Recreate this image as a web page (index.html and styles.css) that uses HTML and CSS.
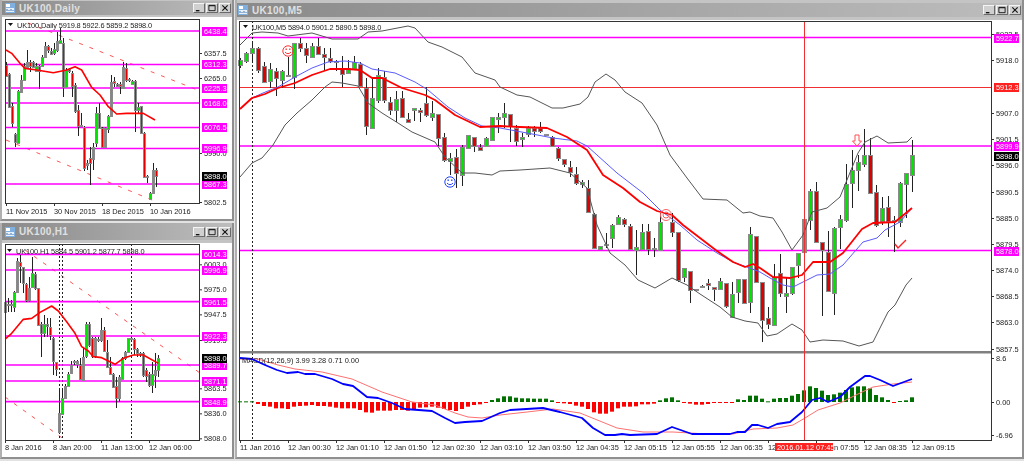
FILE: index.html
```html
<!DOCTYPE html>
<html lang="en">
<head>
  <meta charset="UTF-8" />
  <title>UK100 charts</title>
  <link rel="stylesheet" href="styles.css">
</head>
<body>
  <div class="desk">
    <div class="left">
      <div class="win win-daily">
        <div class="title">
          <svg class="icon" viewBox="0 0 10 10"><rect width="10" height="10" fill="#7fb0e0"/><rect x="1" y="1" width="4" height="3" fill="#fff"/><rect x="1" y="5" width="8" height="4" fill="#e8f0f8"/><path d="M2 8V6M4 8V7M6 8V6M8 8V7" stroke="#3a70b0"/></svg>
          <span class="name">UK100,Daily</span>
          <div class="btns">
            <span class="btn"><svg viewBox="0 0 9 9"><path d="M1 7.500h4" stroke="#111" stroke-width="1.500"/></svg></span>
            <span class="btn"><svg viewBox="0 0 9 9"><path d="M1 1.500h7v6h-7z" fill="none" stroke="#111"/><path d="M1 2h7" stroke="#111"/></svg></span>
            <span class="btn"><svg viewBox="0 0 9 9"><path d="M1.500 1.500l6 6M7.500 1.500l-6 6" stroke="#111" stroke-width="1.300"/></svg></span>
          </div>
        </div>
        <div class="plot"><svg id="daily"></svg></div>
      </div>
      <div class="win win-h1">
        <div class="title">
          <svg class="icon" viewBox="0 0 10 10"><rect width="10" height="10" fill="#7fb0e0"/><rect x="1" y="1" width="4" height="3" fill="#fff"/><rect x="1" y="5" width="8" height="4" fill="#e8f0f8"/><path d="M2 8V6M4 8V7M6 8V6M8 8V7" stroke="#3a70b0"/></svg>
          <span class="name">UK100,H1</span>
          <div class="btns">
            <span class="btn"><svg viewBox="0 0 9 9"><path d="M1 7.500h4" stroke="#111" stroke-width="1.500"/></svg></span>
            <span class="btn"><svg viewBox="0 0 9 9"><path d="M1 1.500h7v6h-7z" fill="none" stroke="#111"/><path d="M1 2h7" stroke="#111"/></svg></span>
            <span class="btn"><svg viewBox="0 0 9 9"><path d="M1.500 1.500l6 6M7.500 1.500l-6 6" stroke="#111" stroke-width="1.300"/></svg></span>
          </div>
        </div>
        <div class="plot"><svg id="h1"></svg></div>
      </div>
    </div>
    <div class="win win-main">
      <div class="title">
        <svg class="icon" viewBox="0 0 10 10"><rect width="10" height="10" fill="#7fb0e0"/><rect x="1" y="1" width="4" height="3" fill="#fff"/><rect x="1" y="5" width="8" height="4" fill="#e8f0f8"/><path d="M2 8V6M4 8V7M6 8V6M8 8V7" stroke="#3a70b0"/></svg>
        <span class="name">UK100,M5</span>
        <div class="btns">
          <span class="btn"><svg viewBox="0 0 9 9"><path d="M1 7.500h4" stroke="#111" stroke-width="1.500"/></svg></span>
          <span class="btn"><svg viewBox="0 0 9 9"><path d="M1 1.500h7v6h-7z" fill="none" stroke="#111"/><path d="M1 2h7" stroke="#111"/></svg></span>
          <span class="btn"><svg viewBox="0 0 9 9"><path d="M1.500 1.500l6 6M7.500 1.500l-6 6" stroke="#111" stroke-width="1.300"/></svg></span>
        </div>
      </div>
      <div class="plot"><svg id="m5"></svg></div>
    </div>
  </div>
  <script src="script.js"></script>
</body>
</html>
```

FILE: styles.css
```css
body {
  margin: 0;
  background: #cfcfcf;
  overflow: hidden;
}
.desk {
  display: flex;
  gap: 1px;
  width: 1024px;
  height: 459px;
  padding-bottom: 2px;
  background: #e2e2e2;
}
.left {
  display: flex;
  flex-direction: column;
  gap: 2px;
  width: 234px;
}
.win {
  display: flex;
  flex-direction: column;
  box-sizing: border-box;
  background: #c4c4c4;
  border-right: 2px solid #8f8f8f;
  border-bottom: 2px solid #8f8f8f;
  border-left: 2px solid #b0b0b0;
}
.win-daily { height: 221px; }
.win-h1 { flex: 1; }
.win-main { flex: 1; padding-top: 1px; }
.title {
  display: flex;
  align-items: center;
  gap: 4px;
  flex: none;
  height: 14px;
  margin: 1px 0 2px;
  padding: 0 1px 0 2px;
  background: linear-gradient(90deg, #8a8a8a, #bdbdbd);
  color: #e0e0e0;
  font: bold 10px "Liberation Sans", Arial, sans-serif;
}
.win-h1 .title {
  height: 17px;
  margin: 0 0 3px;
}
.win-main .title {
  margin: 2px 0 3px;
  padding-left: 0;
}
.icon {
  width: 10px;
  height: 10px;
  margin-left: 1px;
}
.name {
  flex: 1;
  letter-spacing: 0.3px;
}
.btns {
  display: flex;
  gap: 1px;
}
.btn {
  display: flex;
  width: 10px;
  height: 8px;
  background: #d0d0d0;
  border: 1px solid;
  border-color: #f4f4f4 #6a6a6a #6a6a6a #f4f4f4;
}
.btn svg {
  width: 8px;
  height: 8px;
  margin: auto;
}
.plot {
  flex: 1;
  min-height: 0;
  background: #fff;
}
.plot svg {
  display: block;
  width: 100%;
  height: 100%;
  filter: blur(0.3px);
}
.lbl {
  font: 7.4px "Liberation Sans", Arial, sans-serif;
  fill: #222;
}
.lbl.head { letter-spacing: -0.12px; }
.on-tag { fill: #fff; }
```

FILE: script.js
```js
const NS = "http://www.w3.org/2000/svg";

function el(svg, tag, attrs, text) {
  const e = document.createElementNS(NS, tag);
  for (const k in attrs) e.setAttribute(k, attrs[k]);
  if (text) e.textContent = text;
  svg.appendChild(e);
  return e;
}

function setup(id) {
  const svg = document.getElementById(id);
  const r = svg.getBoundingClientRect();
  // the viewBox is the page itself, so the data below is in page pixels
  svg.setAttribute("viewBox", `${r.left} ${r.top} ${r.width} ${r.height}`);
  return svg;
}

function line(svg, x1, y1, x2, y2, color, w, dash) {
  const a = { x1, y1, x2, y2, stroke: color, "stroke-width": w || 1 };
  if (dash) a["stroke-dasharray"] = dash;
  return el(svg, "line", a);
}

function poly(svg, pts, color, w) {
  el(svg, "polyline", {
    points: pts.map(p => p.join(",")).join(" "),
    fill: "none",
    stroke: color,
    "stroke-width": w,
    "stroke-linejoin": "round"
  });
}

function label(svg, x, y, text, cls) {
  el(svg, "text", { x, y: y + 2.6, class: "lbl " + (cls || "") }, text);
}

function tag(svg, x, y, w, text, bg, h) {
  el(svg, "rect", { x, y: Math.round(y) - 4, width: w, height: h || 9, fill: bg });
  label(svg, x + 2, y + 0.5, text, "on-tag");
}

function candle(svg, x, c, bt, bb, wt, wb, halfW) {
  const cx = Math.round(x) + 0.5;
  line(svg, cx, Math.round(wt), cx, Math.round(wb), "#222");
  const top = Math.round(bt) + 0.5;
  const h = Math.max(1, Math.round(bb - bt));
  el(svg, "rect", {
    x: cx - halfW, y: top, width: halfW * 2, height: h,
    fill: c === "g" ? "#00e400" : "#e00000", stroke: "#8a8a8a"
  });
}

function frame(svg, l, t, r, b) {
  el(svg, "rect", { x: l + 0.5, y: t + 0.5, width: r - l, height: b - t, fill: "none", stroke: "#333" });
}

function yTicks(svg, right, list) {
  list.forEach(([y, text]) => {
    line(svg, right, y + 0.5, right + 3, y + 0.5, "#333");
    label(svg, right + 5, y, text);
  });
}

function xTicks(svg, bottom, list, off) {
  list.forEach(([x, text]) => {
    line(svg, x + 0.5, bottom, x + 0.5, bottom + 3, "#333");
    label(svg, x, bottom + (off || 7), text);
  });
}

function header(svg, x, y, text) {
  el(svg, "path", { d: `M${x - 9} ${y - 2}h5l-2.5 3z`, fill: "#111" });
  label(svg, x, y, text, "head");
}

function hlines(svg, l, r, list, color, w) {
  list.forEach(y => line(svg, l, y, r, y, color, w));
}

const z = v => v / 3;

/* ---------- daily ---------- */
const dailyBars = [
  [18,"r",195,228,185,230],[27,"r",222,320,220,325],[37,"r",318,370,310,380],[46,"r",403,427,400,440],
  [55,"g",273,430,270,430],[63,"g",240,275,225,280],[72,"g",197,240,190,240],[81,"g",185,203,150,205],
  [90,"r",185,198,180,215],[100,"r",185,200,183,205],[109,"g",198,212,190,215],[118,"r",198,212,195,268],
  [127,"g",170,198,165,200],[136,"g",137,170,125,175],[145,"r",137,150,135,160],[154,"r",152,160,145,165],
  [163,"g",148,160,130,165],[172,"g",122,150,95,155],[181,"g",120,130,85,130],[190,"r",130,262,115,290],
  [199,"g",210,262,205,265],[208,"r",208,215,205,220],[217,"r",218,258,213,290],[226,"r",255,332,250,340],
  [235,"r",330,378,315,408],[244,"r",376,379,340,380],[253,"r",380,502,378,512],[262,"g",490,497,480,510],
  [271,"r",475,490,440,555],[280,"g",440,475,430,510],[289,"g",340,430,320,440],[298,"r",340,385,310,385],
  [307,"r",385,442,380,445],[316,"g",385,443,380,445],[325,"g",347,385,345,400],[334,"g",245,347,225,350],
  [343,"r",243,250,230,262],[352,"r",252,258,250,262],[361,"r",253,260,245,282],[370,"g",200,262,185,265],
  [379,"r",203,240,190,245],[388,"r",238,241,235,245],[397,"g",243,252,240,255],[406,"r",243,330,240,395],
  [415,"g",322,330,310,340],[424,"r",318,398,318,400],[433,"r",398,530,395,535],[442,"r",527,530,525,550],
  [451,"g",578,597,575,600],[460,"g",510,578,490,580],[469,"r",510,528,505,560]
];
const dailyMa = [[18,150],[35,160],[60,190],[75,205],[110,210],[160,218],[200,210],[225,200],[245,210],[275,262],[300,285],[325,320],[350,342],[380,340],[430,340],[465,360]];

(function () {
  const s = setup("daily");
  line(s, 28, 23, 200, 91, "#f55", 1, "4 7");
  line(s, 6, 140, 157, 202, "#f55", 1, "4 7");
  yTicks(s, 199, [[53,"6357.5"],[78,"6265.0"],[153,"5990.0"],[202,"5802.5"]]);
  hlines(s, 6, 199, [31, 64.5, 88, 103, 127.5, 148.5, 184], "#ff00ff", 1.7);
  dailyBars.forEach(b => candle(s, z(b[0]), b[1], z(b[2]), z(b[3]), z(b[4]), z(b[5]), 1));
  poly(s, dailyMa.map(p => [z(p[0]), z(p[1])]), "#ff0000", 1.6);
  frame(s, 5, 19, 199, 203);
  [[31,"6438.4"],[64,"6312.3"],[88,"6225.3"],[103,"6168.0"],[127,"6076.5"],[148,"5996.9"],[184,"5867.3"]]
    .forEach(([y, t]) => tag(s, 202, y, 25, t, "#ff00ff"));
  tag(s, 202, 176, 25, "5898.0", "#000");
  header(s, 17, 25, "UK100,Daily 5919.8 5922.6 5859.2 5898.0");
  xTicks(s, 203, [[6,"11 Nov 2015"],[54,"30 Nov 2015"],[102,"18 Dec 2015"],[150,"10 Jan 2016"]], 8);
})();

/* ---------- H1 ---------- */
const h1Bars = [
  [16,"g",232,262,218,280],[25,"g",236,239,218,262],[34,"g",237,240,225,262],[43,"g",200,245,198,262],
  [52,"g",108,200,100,200],[61,"r",112,125,90,175],[70,"r",127,175,125,205],[79,"r",178,225,175,230],
  [88,"g",188,225,155,230],[97,"g",145,188,95,190],[106,"r",147,188,140,195],[115,"r",188,298,188,300],
  [124,"r",298,325,290,395],[133,"g",298,325,270,335],[142,"r",298,305,280,335],[151,"r",305,330,280,345],
  [160,"r",340,410,335,450],[169,"r",410,430,410,452],[178,"g",565,622,490,625],[187,"g",518,565,490,565],
  [196,"g",482,518,478,520],[205,"g",447,482,440,485],[214,"g",420,445,408,445],[223,"g",409,412,405,420],
  [232,"g",408,418,405,430],[241,"r",420,462,400,465],[250,"g",395,465,365,468],[259,"g",298,395,290,400],
  [268,"r",298,362,290,365],[277,"r",340,395,335,400],[286,"g",340,395,335,400],[295,"r",342,345,335,350],
  [304,"g",315,345,280,350],[313,"r",315,378,305,380],[322,"r",380,425,345,430],[331,"r",425,445,395,450],
  [340,"r",447,485,445,490],[349,"r",483,518,455,550],[358,"g",455,518,450,530],[367,"g",398,460,395,465],
  [376,"g",382,400,378,405],[385,"g",340,382,338,385],[394,"r",340,343,338,350],[403,"r",342,372,340,390],
  [412,"r",372,385,368,395],[421,"g",385,388,380,395],[430,"r",385,450,380,455],[439,"r",435,452,430,470],
  [448,"r",448,480,440,485],[457,"g",448,480,410,505],[466,"g",435,450,385,490],[475,"g",400,435,390,455]
];
const h1Ma = [[16,342],[35,325],[70,283],[95,280],[120,262],[155,243],[175,258],[200,290],[225,325],[245,365],[265,378],[280,395],[305,398],[345,418],[370,400],[400,390],[430,390],[475,415]];

(function () {
  const s = setup("h1");
  const Y = v => 225 + v / 3;
  line(s, 25, 250, 200, 373, "#f55", 1, "4 7");
  line(s, 5, 397, 65, 440, "#f55", 1, "4 7");
  yTicks(s, 199, [[Y(118),"6003.0"],[Y(193),"5975.0"],[Y(268),"5947.5"],[Y(345),"5919.5"],[Y(490),"5863.5"],[Y(565),"5836.0"],[Y(640),"5808.0"]]);
  [178, 187, 394].forEach(x => line(s, Math.round(z(x)) + 0.5, 244, Math.round(z(x)) + 0.5, 440, "#222", 1, "2 2"));
  hlines(s, 6, 199, [88, 135, 230, 333, 420, 468, 530].map(Y), "#ff00ff", 1.7);
  h1Bars.forEach(b => candle(s, z(b[0]), b[1], Y(b[2]), Y(b[3]), Y(b[4]), Y(b[5]), 1));
  poly(s, h1Ma.map(p => [z(p[0]), Y(p[1])]), "#ff0000", 1.6);
  frame(s, 5, 244, 199, 440);
  [[88,"6014.3"],[135,"5996.9"],[230,"5961.5"],[333,"5922.3"],[420,"5889.7"],[468,"5871.1"],[530,"5848.9"]]
    .forEach(([y, t]) => tag(s, 202, Y(y), 25, t, "#ff00ff"));
  tag(s, 202, Y(398), 25, "5898.0", "#000");
  header(s, 16, 251, "UK100,H1 5884.5 5901.2 5877.7 5898.0");
  xTicks(s, 440, [[5,"8 Jan 2016"],[53,"8 Jan 20:00"],[101,"11 Jan 13:00"],[149,"12 Jan 06:00"]]);
})();

/* ---------- M5 ---------- */
const m5Bars = [
  ["g",180,195,175,205],["g",160,185,155,190],["g",143,157,130,190],["r",145,210,140,220],["r",197,245,187,250],
  ["g",208,245,190,265],["r",214,235,203,287],["g",214,240,210,265],["g",226,228,170,228],["g",130,232,128,268],
  ["r",130,145,115,155],["r",143,165,130,188],["g",138,172,130,175],["r",137,160,115,165],["r",163,173,145,212],
  ["r",175,183,145,190],["r",184,187,180,212],["r",208,223,168,260],["g",203,217,180,222],["g",187,207,168,210],
  ["r",192,258,185,262],["r",265,380,235,405],["g",295,385,235,385],["g",225,300,203,308],["r",230,300,212,310],
  ["r",305,330,292,345],["g",297,330,272,365],["r",295,352,272,355],["r",357,365,340,368],["g",325,332,323,363],
  ["r",330,337,323,365],["r",310,345,262,350],["g",338,350,303,362],["r",343,415,343,438],["r",410,480,400,485],
  ["g",475,484,460,525],["r",472,520,448,563],["g",442,525,435,558],["g",405,445,405,445],["r",412,440,410,457],
  ["r",440,450,432,452],["g",415,440,412,442],["g",352,420,352,420],["g",352,357,340,398],["g",338,350,310,385],
  ["r",343,378,343,425],["r",385,425,375,438],["g",410,415,398,442],["g",383,402,378,410],["r",383,393,378,410],
  ["r",385,395,367,400],["r",402,404,402,405],["r",410,437,408,437],["r",443,472,440,483],["r",478,493,478,500],
  ["r",500,515,483,530],["r",522,550,500,555],["g",545,552,540,565],["r",565,638,540,640],["r",643,745,640,745],
  ["g",738,747,738,747],["r",733,737,700,745],["g",675,715,672,745],["g",650,672,645,675],["r",658,672,655,680],
  ["r",678,747,672,747],["g",740,750,690,825],["g",697,747,672,750],["r",693,747,672,765],["g",745,747,715,770],
  ["g",665,750,640,750],null,["r",665,695,640,710],["r",697,840,697,845],["g",803,830,803,845],["r",812,870,812,910],
  ["g",867,868,867,868],["g",858,860,855,865],["r",850,855,838,870],["r",862,868,862,903],["g",843,867,833,870],
  ["r",850,920,850,925],["g",882,952,845,952],["g",837,875,837,910],["r",838,910,838,912],["g",702,905,680,940],
  ["r",708,845,708,850],["r",845,960,845,1025],["r",955,972,920,988],["g",830,975,793,975],["r",820,880,763,890],
  ["g",880,888,835,940],["g",802,880,802,885],["g",760,797,760,833],["g",657,755,657,755],["g",573,660,568,690],
  ["r",573,725,545,725],["r",727,750,727,947],["r",755,873,693,875],["g",685,880,680,945],["g",658,682,645,747],
  ["g",553,660,492,665],["g",510,550,450,623],["g",485,508,465,573],["g",466,494,387,502],["r",465,580,415,580],
  ["r",575,675,555,680],["g",625,665,590,675],["r",622,665,588,710],["g",660,663,648,757],["g",550,668,545,680],
  ["g",520,553,518,655],["g",466,527,420,575]
];
const upperBand = [[240,45],[252,33],[262,32],[278,33],[288,36],[312,33],[332,39],[358,39],[368,32],[382,31],[408,26],[415,28],[428,42],[442,47],[462,57],[475,73],[495,80],[500,87],[517,95],[530,97],[552,108],[563,108],[580,104],[588,97],[595,82],[606,74],[615,80],[625,92],[642,103],[657,125],[670,155],[687,178],[703,199],[727,200],[743,213],[750,212],[760,216],[773,218],[782,232],[792,250],[803,235],[812,212],[827,208],[840,197],[858,153],[865,142],[877,136],[888,143],[907,142],[912,137]];
const lowerBand = [[240,177],[252,163],[262,158],[273,145],[285,125],[297,113],[312,100],[325,87],[332,82],[342,83],[358,86],[368,103],[382,113],[398,123],[412,132],[435,142],[445,157],[462,173],[475,173],[492,175],[500,171],[520,170],[550,168],[570,173],[587,188],[597,225],[610,253],[625,265],[638,280],[655,288],[672,278],[687,285],[700,294],[720,307],[732,317],[745,321],[758,323],[767,336],[777,334],[792,324],[802,330],[810,342],[823,340],[843,341],[859,346],[873,342],[888,312],[895,305],[906,285],[912,278]];
const blueMa = [[240,109],[252,98],[263,93],[278,87],[295,77],[312,68],[328,62],[345,61],[360,63],[372,69],[395,73],[415,82],[428,90],[448,107],[465,118],[482,126],[500,128],[527,133],[553,138],[577,141],[587,146],[617,173],[643,193],[660,210],[680,225],[697,240],[717,253],[733,262],[747,267],[760,272],[770,278],[783,285],[793,287],[803,282],[817,275],[830,274],[843,265],[863,242],[877,238],[885,230],[900,222],[912,208]];
const redMa = [[240,109],[252,98],[265,94],[278,88],[295,83],[312,75],[330,69],[348,69],[360,70],[372,78],[382,78],[402,88],[425,95],[435,100],[455,115],[480,127],[500,126],[520,127],[547,128],[567,137],[587,150],[603,175],[623,188],[640,202],[657,211],[672,215],[683,225],[700,238],[717,251],[733,262],[745,267],[753,264],[760,268],[773,277],[790,278],[802,275],[813,262],[830,262],[843,253],[862,229],[873,223],[895,222],[912,208]];
const macdLine = [[240,358],[252,359],[265,365],[277,370],[287,373],[298,372],[305,374],[315,374],[332,379],[343,384],[353,386],[367,397],[378,398],[392,403],[405,409],[432,411],[445,418],[455,423],[465,422],[482,421],[500,413],[510,410],[543,408],[560,412],[582,418],[593,428],[605,435],[615,435],[622,434],[630,435],[657,434],[672,427],[692,434],[730,434],[737,432],[745,432],[752,425],[758,425],[768,428],[777,424],[790,422],[802,412],[812,400],[820,398],[828,402],[840,397],[850,387],[865,376],[870,376],[880,380],[893,386],[912,379]];
const macdSignal = [[240,359],[258,359],[278,365],[295,369],[322,372],[352,379],[382,392],[412,402],[435,405],[455,413],[468,417],[482,418],[500,415],[527,412],[553,409],[580,413],[617,428],[643,432],[673,432],[707,434],[733,434],[753,429],[777,428],[793,425],[805,418],[818,410],[840,403],[860,393],[873,387],[893,384],[912,382]];
// histogram ends, in zoomed units, zero line at 530
const hist = [529,529,529,537,543,545,550,550,552,545,543,542,540,543,543,545,548,550,550,550,555,562,563,557,557,557,555,555,557,553,548,547,545,548,552,555,558,552,545,540,538,534,525,520,514,514,518,520,520,521,521,521,526,532,535,537,542,545,552,562,566,566,560,550,545,545,544,538,538,536,526,520,517,526,532,536,539,539,537,534,533,533,533,523,525,512,512,521,529,521,519,519,512,507,496,484,489,497,510,508,503,495,487,484,484,490,510,517,525,533,528,526,517];

function smiley(s, x, y, color) {
  el(s, "circle", { cx: x, cy: y, r: 5.2, fill: "none", stroke: color });
  el(s, "path", { d: `M${x - 3} ${y + 1}q3 3.4 6 0`, fill: "none", stroke: color });
  el(s, "rect", { x: x - 2.5, y: y - 2.5, width: 1.4, height: 1.4, fill: color });
  el(s, "rect", { x: x + 1.1, y: y - 2.5, width: 1.4, height: 1.4, fill: color });
}

(function () {
  const s = setup("m5");
  yTicks(s, 991, [[34,"5922.5"],[60,"5918.0"],[113,"5907.0"],[139,"5901.5"],[165,"5896.0"],[192,"5890.5"],[218,"5885.0"],[244,"5879.5"],[270,"5874.0"],[296,"5868.5"],[322,"5863.0"],[349,"5857.5"],[358,"8.6"],[402,"0.00"],[435,"-6.96"]]);
  line(s, 240, 87.5, 991, 87.5, "#f03030");
  hlines(s, 240, 991, [37.5, 146, 250.5], "#ff00ff", 1.7);
  line(s, 252.5, 21, 252.5, 440, "#222", 1, "2 2");
  m5Bars.forEach((b, i) => {
    if (b) candle(s, 240 + 6 * i, b[0], z(b[1]), z(b[2]), z(b[3]), z(b[4]), 2);
  });
  poly(s, upperBand, "#555", 1);
  poly(s, lowerBand, "#555", 1);
  poly(s, blueMa, "#5a5aff", 1);
  poly(s, redMa, "#ff0000", 1.8);

  el(s, "rect", { x: 239, y: 351, width: 752, height: 2.5, fill: "#808080" });
  hist.forEach((h, i) => {
    const y = 225 + h / 3;
    const zero = 402;
    el(s, "rect", { x: 238 + 6 * i, y: Math.min(y, zero), width: 4, height: Math.max(1, Math.abs(y - zero)), fill: h < 530 ? "#007000" : "#ff0000" });
  });
  poly(s, macdSignal, "#ff7070", 1);
  poly(s, macdLine, "#0000ff", 1.8);
  label(s, 242, 360, "MACD(12,26,9) 3.99 3.28 0.71 0.00");

  line(s, 804.5, 21, 804.5, 440, "#f03030");
  smiley(s, 288, 51, "#ff3030");
  smiley(s, 450, 182, "#2040ff");
  el(s, "circle", { cx: 666, cy: 215, r: 5.5, fill: "none", stroke: "#ff6060" });
  el(s, "circle", { cx: 666, cy: 215, r: 3, fill: "none", stroke: "#ff6060" });
  el(s, "path", { d: "M855 135h4v6h2.500l-4.500 5-4.500-5h2.500z", fill: "#fff", stroke: "#ff5050" });
  el(s, "path", { d: "M895 244l3 4 8-8", fill: "none", stroke: "#ff2020", "stroke-width": 1.4 });

  frame(s, 239, 21, 991, 440);
  tag(s, 994, 37.5, 25, "5922.7", "#ff00ff");
  tag(s, 994, 87, 25, "5912.3", "#ff2020");
  tag(s, 994, 146, 25, "5899.9", "#ff00ff");
  tag(s, 994, 156, 25, "5898.0", "#000");
  tag(s, 994, 250.5, 25, "5878.0", "#ff00ff");
  header(s, 252, 27, "UK100,M5 5894.0 5901.2 5890.5 5898.0");

  const times = ["11 Jan 2016","12 Jan 00:30","12 Jan 01:10","12 Jan 01:50","12 Jan 02:30","12 Jan 03:10","12 Jan 03:50","12 Jan 04:35","12 Jan 05:15","12 Jan 05:55","12 Jan 06:35","12 Jan 07:15","12 Jan 07:55","12 Jan 08:35","12 Jan 09:15"];
  xTicks(s, 440, times.map((t, i) => [240 + 48 * i, t]));
  el(s, "rect", { x: 775, y: 443, width: 58, height: 8, fill: "#ff2020" });
  label(s, 777, 447, "2016.01.12 07:45", "on-tag");
})();
```
